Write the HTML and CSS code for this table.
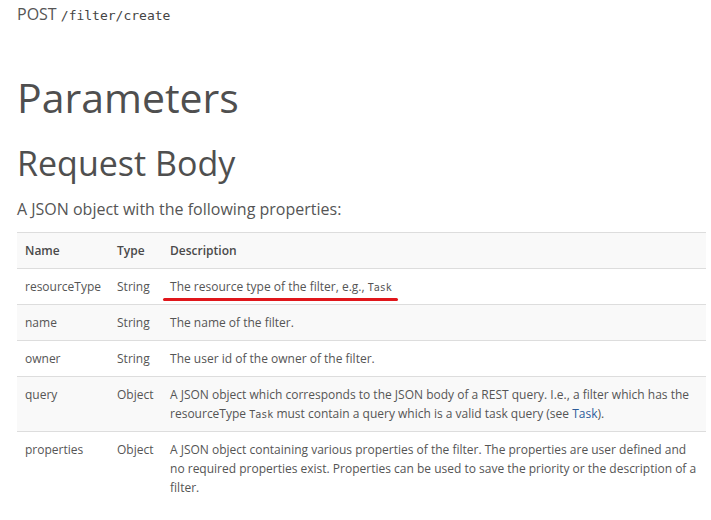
FILE: index.html
```html
<!DOCTYPE html>
<html>
<head>
<meta charset="utf-8">
<link rel="stylesheet" href="styles.css">
</head>
<body>
<div class="page">
  <div class="endpoint">POST <code class="path">/filter/create</code></div>
  <h1 class="title">Parameters</h1>
  <h2 class="subtitle">Request Body</h2>
  <p class="intro">A JSON object with the following properties:</p>
  <table class="props">
    <thead>
      <tr><th class="c-name">Name</th><th class="c-type">Type</th><th>Description</th></tr>
    </thead>
    <tbody>
      <tr><td>resourceType</td><td>String</td><td><span class="marked">The resource type of the filter, e.g., <code class="inline">Task</code></span></td></tr>
      <tr><td>name</td><td>String</td><td>The name of the filter.</td></tr>
      <tr><td>owner</td><td>String</td><td>The user id of the owner of the filter.</td></tr>
      <tr><td>query</td><td>Object</td><td>A JSON object which corresponds to the JSON body of a REST query. I.e., a filter which has the resourceType <code class="inline">Task</code> must contain a query which is a valid task query (see <a class="link" href="#">Task</a>).</td></tr>
      <tr><td>properties</td><td>Object</td><td>A JSON object containing various properties of the filter. The properties are user defined and no required properties exist. Properties can be used to save the priority or the description of a filter.</td></tr>
    </tbody>
  </table>
</div>
</body>
</html>
```
FILE: styles.css
```css
html, body {
  margin: 0;
  padding: 0;
  background: #ffffff;
}
body {
  font-family: "Open Sans", "Noto Sans", sans-serif;
  color: #555555;
}
.page {
  padding: 3px 5px 0 17px;
}
.endpoint {
  font-size: 16px;
  line-height: 22px;
  color: #555;
}
.path {
  font-family: "DejaVu Sans Mono", "Liberation Mono", monospace;
  font-size: 13px;
  line-height: 1;
  color: #444;
}
.title {
  font-size: 41px;
  line-height: 46px;
  font-weight: 400;
  margin: 49px 0 0;
  color: #4f4f4f;
}
.subtitle {
  font-size: 34px;
  line-height: 40px;
  font-weight: 400;
  margin: 23px 0 0;
  color: #4f4f4f;
}
.intro {
  font-size: 16px;
  line-height: 24px;
  margin: 14px 0 0;
  color: #555;
}
.props {
  margin-top: 11px;
  width: 689px;
  border-collapse: collapse;
  font-size: 12px;
  line-height: 19px;
}
.props th, .props td {
  text-align: left;
  vertical-align: top;
  padding: 8px;
  border-top: 1px solid #dddddd;
}
.props th {
  font-weight: 600;
  color: #4a4a4a;
}
.props thead tr {
  background: #f9f9f9;
}
.props tbody tr:nth-child(even) {
  background: #f9f9f9;
}
.c-name { width: 76px; }
.c-type { width: 37px; }
.inline {
  font-family: "DejaVu Sans Mono", "Liberation Mono", monospace;
  font-size: 10px;
  line-height: 1;
  color: #555;
}
.link {
  color: #2d5c99;
  text-decoration: none;
}
.marked {
  position: relative;
}
.marked::after {
  content: "";
  position: absolute;
  left: -7px;
  right: -6px;
  bottom: -6px;
  height: 3px;
  border-radius: 2px;
  background: #e0161b;
}
```
